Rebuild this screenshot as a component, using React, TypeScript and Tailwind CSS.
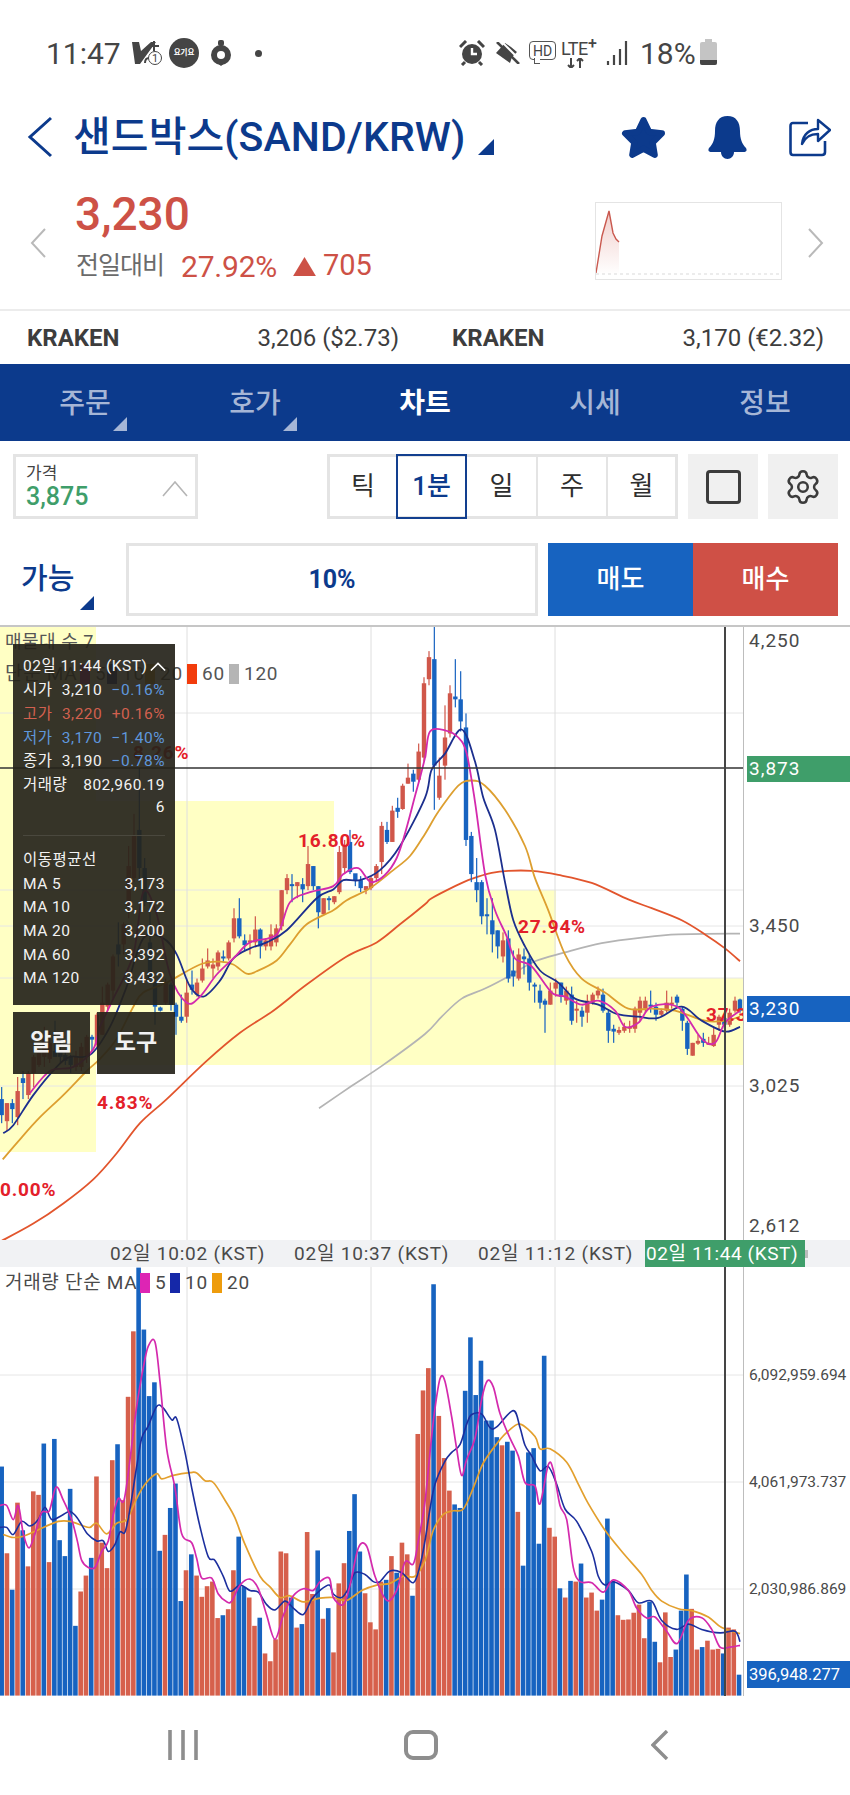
import React from 'react';
import { Settings } from 'lucide-react';

type Pt = [number, number];

const RED = '#d0574a';
const BLUE = '#1763c0';

// all chart numbers below were read off 3x crops, so they get scaled back here
const mx = (x: number) => x / 3;
const my = (y: number) => y / 2.489;
const vx = (x: number) => x / 3;
const vy = (y: number) => y / 2.825 - 27;

const join = (left: Pt[], right: Pt[]) => [...left, ...right.map(([x, y]) => [x + 1275, y] as Pt)];

// catmull-rom through the read-off points, the app's MA lines are smooth
const smooth = (pts: Pt[]) => {
  let d = `M${pts[0][0].toFixed(1)} ${pts[0][1].toFixed(1)}`;
  for (let i = 0; i < pts.length - 1; i++) {
    const p0 = pts[i - 1] ?? pts[i];
    const p1 = pts[i];
    const p2 = pts[i + 1];
    const p3 = pts[i + 2] ?? p2;
    const c1x = p1[0] + (p2[0] - p0[0]) / 6;
    const c1y = p1[1] + (p2[1] - p0[1]) / 6;
    const c2x = p2[0] - (p3[0] - p1[0]) / 6;
    const c2y = p2[1] - (p3[1] - p1[1]) / 6;
    d += ` C${c1x.toFixed(1)} ${c1y.toFixed(1)} ${c2x.toFixed(1)} ${c2y.toFixed(1)} ${p2[0].toFixed(1)} ${p2[1].toFixed(1)}`;
  }
  return d;
};
const toMain = (pts: Pt[]) => smooth(pts.map(([x, y]) => [mx(x), my(y)] as Pt));
const toVol = (pts: Pt[]) => smooth(pts.map(([x, y]) => [vx(x), vy(y)] as Pt));

const ma60 = join(
  [[0,1535],[100,1490],[190,1440],[280,1380],[350,1315],[420,1240],[500,1180],[620,1085],[720,1015],[820,960],[920,895],[1040,825],[1130,790],[1200,745],[1275,695]],
  [[20,680],[90,650],[140,632],[200,617],[250,612],[320,612],[400,622],[500,642],[610,683],[680,705],[770,735],[840,770],[900,805],[945,837]],
);
const ma120 = join(
  [[957,1203],[1050,1150],[1150,1095],[1275,1018]],
  [[50,975],[110,930],[180,905],[250,875],[330,837],[420,815],[530,792],[650,778],[760,770],[945,768]],
);
const ma20 = join(
  [[8,1330],[60,1280],[120,1225],[190,1170],[260,1110],[300,1080],[350,1030],[400,950],[430,915],[500,890],[600,845],[660,838],[700,845],[740,868],[770,862],[830,835],[870,795],[920,745],[1000,710],[1040,685],[1110,655],[1180,610],[1230,575],[1275,520]],
  [[40,465],[100,400],[140,387],[180,400],[240,460],[300,550],[330,630],[370,710],[420,820],[470,880],[540,915],[610,955],[680,955],[750,960],[840,985],[900,985],[945,975]],
);
const ma10 = join(
  [[10,1265],[40,1245],[100,1170],[170,1100],[210,1075],[270,1070],[330,1000],[380,900],[430,780],[490,780],[530,820],[570,900],[610,925],[660,885],[700,830],[750,805],[800,790],[860,760],[950,680],[1000,658],[1030,635],[1080,635],[1140,610],[1200,550],[1275,430]],
  [[20,360],[60,320],[110,260],[150,340],[175,430],[210,510],[240,640],[265,735],[300,800],[345,860],[400,890],[450,930],[520,945],[575,968],[640,975],[700,978],[770,950],[830,985],[900,1012],[945,1000]],
);
const ma5 = join(
  [[90,1165],[150,1110],[220,1100],[280,1055],[300,1000],[340,930],[400,820],[430,665],[470,720],[510,870],[560,940],[600,925],[650,870],[700,830],[750,790],[830,770],[870,690],[930,665],[1000,650],[1030,620],[1075,605],[1120,640],[1190,580],[1250,410],[1275,330]],
  [[15,265],[60,262],[100,280],[125,320],[150,440],[180,620],[210,710],[245,775],[270,830],[320,850],[380,915],[420,925],[470,945],[520,935],[570,960],[600,1000],[640,990],[680,950],[760,952],[830,1030],[870,1040],[900,990],[945,960]],
);

// x, wick top, wick bottom, body top, body bottom, 1 = blue
type Candle = [number, number, number, number, number, number];
const candlesLeft: Candle[] = [
  [5,1150,1240,1180,1220,1],[21,1190,1260,1190,1235,0],[37,1180,1240,1190,1205,1],[53,1125,1245,1160,1225,0],[69,1110,1180,1128,1140,1],[85,1110,1180,1115,1170,0],
  [101,1070,1150,1075,1115,0],[117,1060,1100,1065,1095,0],[133,1000,1100,1030,1075,0],[149,1010,1090,1040,1080,0],[165,985,1070,1060,1075,1],[181,1040,1090,1060,1075,1],
  [196,1060,1095,1070,1085,1],[212,1070,1115,1075,1095,1],[228,1060,1110,1075,1100,0],[244,1040,1110,1050,1100,0],[260,1020,1090,1025,1075,0],[276,1020,1060,1025,1032,1],
  [291,965,1050,970,1045,0],[307,900,1020,940,1020,0],[323,890,960,895,950,0],[339,820,930,825,910,0],[355,740,850,795,820,1],[371,740,820,745,795,0],
  [386,550,730,600,700,0],[402,470,640,525,630,0],[418,355,640,510,605,1],[434,580,700,605,690,1],[450,690,880,790,880,1],[465,880,995,890,950,1],
  [481,950,962,952,960,1],[497,880,945,890,940,0],[513,890,960,895,945,1],[528,940,1020,945,975,1],[544,920,990,975,985,1],[560,880,990,915,975,0],
  [576,860,920,895,908,1],[591,880,925,890,920,0],[607,830,890,855,885,0],[623,805,855,835,850,0],[639,830,880,845,855,0],[654,810,860,815,850,0],
  [670,810,840,825,830,1],[686,785,835,790,830,0],[702,705,790,730,780,0],[718,680,780,730,775,1],[734,770,810,785,797,1],[750,770,820,785,790,0],
  [766,725,800,758,790,0],[781,755,830,758,800,1],[797,780,810,785,800,0],[813,745,810,770,800,0],[829,745,800,755,790,0],[845,660,760,660,750,0],
  [861,620,670,630,660,0],[876,620,690,645,650,1],[892,640,680,640,650,0],[908,630,690,645,658,1],[924,550,660,595,650,0],[940,600,660,600,650,1],
  [955,650,755,650,715,1],[971,680,720,680,720,0],[987,675,710,680,685,1],[1003,675,695,675,690,0],[1018,550,670,565,665,0],[1034,535,620,550,605,0],
  [1050,510,620,540,615,1],[1066,620,650,618,635,1],[1082,625,665,635,655,1],[1098,650,670,650,660,0],[1113,625,660,630,655,0],[1129,595,640,600,630,0],
  [1145,490,620,500,590,0],[1161,490,545,510,540,1],[1177,450,540,462,540,0],[1193,430,480,455,465,1],[1208,395,460,400,458,0],[1224,345,395,380,395,0],
  [1240,360,415,370,390,1],[1256,295,390,315,385,0],[1272,130,340,145,330,0],
];
const candlesRight: Candle[] = [
  [12,65,150,80,135,0],[28,5,460,85,350,1],[43,330,435,375,430,0],[60,200,385,280,350,0],[75,150,280,170,270,0],[91,85,205,178,185,1],
  [107,115,265,185,240,1],[123,220,550,255,535,1],[139,515,640,525,620,1],[155,580,690,640,660,1],[170,635,745,640,725,1],[186,680,770,720,725,1],
  [202,680,815,735,770,1],[218,760,830,760,800,1],[234,765,840,785,825,0],[250,760,890,780,880,1],[265,810,900,860,875,1],[281,805,885,820,880,0],
  [297,805,870,825,832,1],[313,820,910,830,890,1],[329,890,940,895,900,1],[345,895,955,910,940,1],[360,930,1015,935,945,1],[376,890,945,910,945,0],
  [392,880,925,890,905,0],[408,890,940,890,925,1],[424,900,945,910,935,0],[440,900,995,920,985,1],[455,935,990,955,960,0],[471,950,1000,960,975,1],
  [487,920,990,935,965,0],[503,915,945,920,940,0],[519,900,930,910,922,0],[534,905,965,920,960,1],[550,960,1040,965,1010,1],[566,995,1040,1005,1012,1],
  [582,1000,1020,1008,1015,0],[598,990,1015,1000,1010,0],[614,985,1015,1000,1005,0],[630,950,1015,955,1005,0],[645,925,985,935,965,0],[661,925,965,935,955,0],
  [677,910,965,945,950,1],[693,940,985,950,970,1],[709,955,975,960,970,0],[725,910,965,940,960,0],[740,925,955,940,945,0],[756,920,950,925,940,1],
  [772,950,1010,955,985,1],[787,985,1070,990,1055,1],[803,1040,1072,1040,1072,0],[819,1020,1045,1035,1042,0],[835,1015,1050,1030,1040,1],[851,1025,1045,1040,1045,0],
  [866,1000,1050,1020,1048,0],[882,970,1010,975,995,0],[898,970,1005,978,995,1],[914,955,1000,965,995,0],[930,925,965,935,960,0],[945,930,965,932,960,1],
];
const candles: Candle[] = [...candlesLeft, ...candlesRight.map((c) => [c[0] + 1275, c[1], c[2], c[3], c[4], c[5]] as Candle)];

// bar tops in crop pixels, negative = blue bar
const volumeTops = [
  -640,885,-988,742,-820,922,710,720,-575,910,-562,-848,-893,-703,-1090,993,948,-898,668,855,927,622,-577,735,443,258,-78,-253,-441,-402,-878,833,-757,-688,-1020,933,-888,948,1008,978,965,1068,-1060,1043,933,-838,-980,1010,1090,-1067,1168,1190,1128,880,885,-1010,1095,-1085,825,1000,-877,1070,-1040,1165,970,913,-822,-718,-880,998,1080,1100,965,-960,893,-940,855,888,-1005,548,425,
  362,-125,497,616,708,-747,-757,-426,-275,-438,-341,-510,-510,-557,580,-570,-595,768,-920,-600,-588,-858,-327,813,838,-984,1010,-963,965,-914,1010,996,1047,-1016,-787,-965,1060,1073,1072,1053,1030,1125,-1022,-1135,1193,1052,1178,-1157,-1047,-945,1042,1157,-1150,1132,1157,1155,-1168,1095,1100,-1228,
];

const vol5 = join(
  [[0,750],[20,750],[40,790],[55,750],[70,830],[87,870],[105,830],[125,770],[148,765],[168,698],[190,735],[215,790],[232,850],[245,905],[265,925],[285,925],[305,880],[325,850],[340,775],[355,730],[372,735],[390,620],[410,470],[430,360],[445,300],[465,288],[480,400],[500,590],[525,700],[545,830],[575,855],[590,900],[605,955],[635,955],[655,1000],[680,1022],[695,1020],[720,975],[750,958],[775,985],[800,1060],[825,1128],[850,1060],[880,1005],[910,985],[940,990],[960,965],[988,955],[1000,1010],[1030,1030],[1050,975],[1075,870],[1100,865],[1125,950],[1160,1018],[1190,990],[1215,910],[1240,915],[1255,850],[1275,740]],
  [[15,600],[28,490],[45,392],[60,400],[80,500],[95,590],[110,665],[125,620],[150,560],[170,450],[187,398],[205,415],[225,490],[255,560],[280,610],[300,685],[330,695],[345,745],[370,635],[385,650],[405,750],[425,790],[445,925],[465,965],[500,968],[535,995],[565,960],[610,990],[635,1040],[665,1068],[690,1065],[725,1105],[757,1140],[790,1075],[830,1067],[860,1100],[885,1150],[915,1150],[945,1145]],
);
const vol10 = join(
  [[0,812],[20,812],[40,832],[65,795],[90,808],[115,790],[135,755],[155,790],[185,778],[210,767],[232,785],[262,830],[290,850],[310,850],[325,880],[345,860],[360,825],[375,825],[390,760],[410,640],[425,560],[445,525],[470,470],[490,475],[515,508],[530,505],[555,600],[575,700],[600,810],[625,895],[645,905],[670,950],[690,992],[720,975],[750,990],[775,995],[800,1030],[825,1045],[855,1020],[880,1040],[910,1058],[935,1015],[960,990],[988,975],[1000,1000],[1025,1010],[1045,985],[1065,940],[1095,945],[1120,965],[1140,965],[1170,935],[1205,940],[1240,968],[1260,920],[1275,850]],
  [[15,760],[30,690],[60,625],[80,600],[105,578],[125,520],[140,493],[170,492],[195,530],[215,528],[265,482],[285,530],[300,580],[320,610],[345,652],[370,640],[395,690],[420,760],[455,795],[500,880],[520,950],[540,975],[565,965],[610,990],[640,1025],[680,1020],[710,1075],[755,1100],[790,1085],[830,1100],[885,1110],[930,1105],[945,1135]],
);
const vol20 = join(
  [[10,832],[35,840],[65,838],[100,825],[135,810],[175,795],[210,795],[250,808],[270,812],[290,800],[320,830],[350,800],[380,790],[410,730],[435,690],[470,660],[485,675],[520,665],[570,657],[590,658],[615,680],[640,685],[675,735],[705,785],[735,860],[780,950],[810,980],[840,1010],[870,1005],[910,1022],[960,1012],[1000,1010],[1040,1018],[1085,990],[1130,975],[1170,970],[1210,950],[1245,950],[1275,905]],
  [[25,820],[55,775],[85,765],[115,760],[145,700],[175,630],[220,570],[250,540],[285,520],[330,555],[345,590],[375,590],[425,628],[460,690],[490,745],[540,820],[595,885],[650,945],[680,990],[710,1020],[760,1042],[800,1047],[850,1065],[890,1095],[945,1112]],
);

const tabs = ['주문', '호가', '차트', '시세', '정보'];

const Corner = ({ className }: { className: string }) => (
  <svg viewBox="0 0 14 14" className={className}>
    <polygon points="14,0 14,14 0,14" fill="currentColor" />
  </svg>
);

const StatusBar = () => (
  <div className="flex h-[106px] items-center text-[#454545]">
    <span className="ml-[46px] w-[80px] text-[30px]">11:47</span>
    <svg viewBox="0 0 30 24" className="ml-[6px] h-[24px] w-[30px]">
      <polygon points="0,1 7,1 9,10 19,1 24,1 8,23 3,23" fill="#454545" />
      <path d="M22 0 V10 M17 5 H27" stroke="#454545" strokeWidth="2" />
      <path d="M13 22 Q13 17 17 17" stroke="#454545" strokeWidth="2" fill="none" />
      <circle cx="23" cy="17" r="6.5" fill="#fff" stroke="#454545" strokeWidth="1" />
      <text x="23" y="21" textAnchor="middle" fontSize="11" fill="#454545">1</text>
    </svg>
    <span className="ml-[7px] flex h-[30px] w-[30px] items-center justify-center rounded-full bg-[#454545] text-[7.5px] font-bold text-white">
      요기요
    </span>
    <svg viewBox="0 0 20 26" className="ml-[12px] h-[26px] w-[20px]">
      <rect x="7" y="0" width="6" height="6" rx="2" fill="#454545" />
      <circle cx="10" cy="15" r="7" fill="none" stroke="#454545" strokeWidth="6" />
      <polygon points="5,22 15,22 10,26" fill="#454545" />
    </svg>
    <span className="ml-[24px] h-[7px] w-[7px] rounded-full bg-[#454545]" />
    <svg viewBox="0 0 26 26" className="ml-[197px] h-[26px] w-[26px]">
      <circle cx="13" cy="14" r="10" fill="#454545" />
      <path d="M13 8 V14 H18" stroke="#fff" strokeWidth="2.4" fill="none" />
      <path d="M1 7 L7 1 M25 7 L19 1" stroke="#454545" strokeWidth="3" />
      <path d="M6 22 L3 25 M20 22 L23 25" stroke="#454545" strokeWidth="3" />
    </svg>
    <svg viewBox="0 0 24 22" className="ml-[11px] h-[22px] w-[24px]">
      <path d="M9 1 L0 11 L14 21 L16 15 L21 10 L15 5 Z" fill="#454545" />
      <path d="M4 -2 L26 20" stroke="#fff" strokeWidth="2" />
      <path d="M1 0 L23 22" stroke="#454545" strokeWidth="2.6" />
    </svg>
    <span className="relative ml-[9px] mb-[5px] flex h-[19px] w-[27px] items-center justify-center rounded-[4px] border-[1.5px] border-[#555] text-[14px] leading-none">
      HD
      <span className="absolute bottom-[-5px] left-[4px] h-[6px] w-[6px] border-b-[1.5px] border-l-[1.5px] border-[#555] bg-white" />
    </span>
    <span className="relative ml-[5px] h-[26px] w-[40px]">
      <span className="absolute left-0 top-[-1px] text-[18px] leading-[20px] tracking-[-0.5px]">LTE</span>
      <span className="absolute left-[27px] top-[-4px] text-[16px] font-medium leading-[16px]">+</span>
      <svg viewBox="0 0 20 10" className="absolute bottom-[-2px] left-[5px] h-[10px] w-[20px]">
        <path d="M5 0 V10 M2 7 L5 10 L8 7 M14 10 V0 M11 3 L14 0 L17 3" stroke="#454545" strokeWidth="2" fill="none" />
      </svg>
    </span>
    <svg viewBox="0 0 22 24" className="ml-[5px] h-[24px] w-[22px]">
      <path d="M2 24 V20 M8 24 V14 M14 24 V8 M20 24 V0" stroke="#454545" strokeWidth="2.2" />
    </svg>
    <span className="ml-[12px] w-[56px] text-[30px]">18%</span>
    <span className="relative ml-[4px] flex h-[23px] w-[17px] flex-col justify-end rounded-[2px] bg-[#c4c4c4]">
      <span className="absolute left-[5px] top-[-3px] h-[3px] w-[7px] bg-[#c4c4c4]" />
      <span className="h-[5px] rounded-b-[2px] bg-[#454545]" />
    </span>
  </div>
);

const Header = () => (
  <div className="flex h-[62px] items-center text-[#0c3a8c]">
    <svg viewBox="0 0 26 42" className="ml-[27px] h-[42px] w-[26px]">
      <path d="M24 2 L3 21 L24 40" fill="none" stroke="#0c3a8c" strokeWidth="3" />
    </svg>
    <span className="ml-[20px] w-[396px] whitespace-nowrap text-[41px] font-medium leading-none tracking-[0.1px]">샌드박스(SAND/KRW)</span>
    <Corner className="ml-[9px] mt-[19px] h-[16px] w-[16px]" />
    <svg viewBox="0 0 44 42" className="ml-[127px] h-[43px] w-[45px]">
      <polygon points="22,4 27.5,15.5 40,17 31,26 33,38 22,32 11,38 13,26 4,17 16.5,15.5" fill="#0c3a8c" stroke="#0c3a8c" strokeWidth="6" strokeLinejoin="round" />
    </svg>
    <svg viewBox="0 0 39 43" className="ml-[42px] h-[43px] w-[39px]">
      <path d="M19.5 0 C28 0 32 6 32 15 C32 23 34 28 38 32 Q40 36 35 36 H26 C26 40 23 43 19.5 43 C16 43 13 40 13 36 H4 Q-1 36 1 32 C5 28 7 23 7 15 C7 6 11 0 19.5 0 Z" fill="#0c3a8c" />
    </svg>
    <svg viewBox="0 0 42 40" className="ml-[42px] h-[40px] w-[42px]">
      <path d="M19 6 H4 Q1.5 6 1.5 9 V35 Q1.5 38 4 38 H33 Q36 38 36 35 V24" fill="none" stroke="#0c3a8c" strokeWidth="2.6" />
      <path d="M13 27 C14 17 21 12 29 12 V3 L41 13 L29 24 V17 C22 17 16 20 13 27 Z" fill="#fff" stroke="#0c3a8c" strokeWidth="2.4" strokeLinejoin="round" />
    </svg>
  </div>
);

const PriceRow = () => (
  <div className="flex h-[143px] border-b-2 border-[#ececec]">
    <svg viewBox="0 0 16 30" className="ml-[30px] mt-[60px] h-[30px] w-[16px]">
      <path d="M15 1 L2 15 L15 29" fill="none" stroke="#b9b9b9" strokeWidth="2" />
    </svg>
    <div className="ml-[29px] flex flex-col pt-[20px]">
      <span className="text-[46px] font-medium leading-[52px] text-[#cd5146]">3,230</span>
      <div className="ml-[1px] mt-[10px] flex h-[32px] items-center">
        <span className="w-[105px] text-[25px] text-[#6b6b6b] tracking-[-1px]">전일대비</span>
        <span className="w-[111px] text-[30px] tracking-[-0.2px] text-[#cd5146]">27.92%</span>
        <svg viewBox="0 0 24 20" className="mt-[1px] h-[19px] w-[25px]">
          <polygon points="12,0 24,20 0,20" fill="#cd5146" />
        </svg>
        <span className="ml-[6px] text-[29px] text-[#cd5146]">705</span>
      </div>
    </div>
    <div className="relative ml-auto mt-[34px] h-[78px] w-[187px] border border-[#e4e4e4]">
      <svg viewBox="0 0 185 76" className="h-[76px] w-[185px]">
        <defs>
          <linearGradient id="spark" x1="0" x2="0" y1="0" y2="1">
            <stop offset="0" stopColor="#cd5146" stopOpacity="0.28" />
            <stop offset="1" stopColor="#cd5146" stopOpacity="0" />
          </linearGradient>
        </defs>
        <path d="M0 70 L6 33 L13 8 L17 30 L20 36 L23 39 V72 H0 Z" fill="url(#spark)" />
        <path d="M0 70 L6 33 L13 8 L17 30 L20 36 L23 39" fill="none" stroke="#c9584e" strokeWidth="1.4" />
        <path d="M0 71 H185" stroke="#d9d9d9" strokeDasharray="3 3" />
      </svg>
    </div>
    <svg viewBox="0 0 16 30" className="ml-[26px] mr-[26px] mt-[60px] h-[30px] w-[16px]">
      <path d="M1 1 L14 15 L1 29" fill="none" stroke="#b9b9b9" strokeWidth="2" />
    </svg>
  </div>
);

const KrakenRow = () => (
  <div className="flex h-[53px] items-center text-[24px] text-[#3d3d3d]">
    <div className="ml-[27px] flex w-[372px] justify-between">
      <span className="font-bold">KRAKEN</span>
      <span>3,206 ($2.73)</span>
    </div>
    <div className="ml-[53px] flex w-[372px] justify-between">
      <span className="font-bold">KRAKEN</span>
      <span>3,170 (€2.32)</span>
    </div>
  </div>
);

const TabBar = () => (
  <div className="grid h-[77px] grid-cols-5 bg-[#0c3a8c] text-[28px]">
    {tabs.map((t, i) => (
      <div key={t} className={`relative flex items-center justify-center pt-[3px] ${i === 2 ? 'font-bold text-white' : 'font-medium text-[#a6b6d6]'}`}>
        {t}
        {i < 2 && <Corner className="absolute left-[113px] top-[53px] h-[14px] w-[14px]" />}
      </div>
    ))}
  </div>
);

const Controls = () => (
  <div className="pb-[9px]">
    <div className="flex pl-[13px] pt-[13px]">
      <div className="relative h-[65px] w-[185px] border-[3px] border-[#e4e4e4] pl-[10px] pt-[6px]">
        <div className="text-[17px] leading-[20px] text-[#444]">가격</div>
        <div className="text-[25px] font-medium leading-[28px] text-[#3f9e6a]">3,875</div>
        <svg viewBox="0 0 26 16" className="absolute left-[146px] top-[24px] h-[16px] w-[26px]">
          <path d="M1 15 L13 1 L25 15" fill="none" stroke="#b5b5b5" strokeWidth="1.6" />
        </svg>
      </div>
      <div className="ml-[129px] flex h-[65px] w-[351px] border-[3px] border-[#e4e4e4] text-[26px] text-[#2e2e2e]">
        <div className="flex w-[66px] items-center justify-center">틱</div>
        <div className="z-10 mt-[-3px] flex h-[65px] w-[71px] items-center justify-center border-2 border-[#123f8f] font-medium text-[#0c3a8c]">1분</div>
        <div className="flex w-[71px] items-center justify-center border-r-2 border-[#e4e4e4]">일</div>
        <div className="flex w-[70px] items-center justify-center border-r-2 border-[#e4e4e4]">주</div>
        <div className="flex flex-1 items-center justify-center">월</div>
      </div>
      <div className="ml-[10px] flex h-[65px] w-[70px] items-center justify-center bg-[#f0f0f0]">
        <div className="h-[34px] w-[35px] rounded-[4px] border-[3px] border-[#3c3c3c]" />
      </div>
      <div className="ml-[10px] flex h-[65px] w-[70px] items-center justify-center bg-[#f0f0f0]">
        <Settings className="h-[38px] w-[38px] text-[#3c3c3c]" strokeWidth={1.6} />
      </div>
    </div>
    <div className="mt-[24px] flex h-[73px]">
      <div className="relative w-[126px] pl-[21px] text-[29px] font-medium leading-[73px] text-[#0c3a8c]">
        가능
        <Corner className="absolute left-[80px] top-[53px] h-[14px] w-[14px]" />
      </div>
      <div className="flex w-[412px] items-center justify-center border-[3px] border-[#e4e4e4] text-[25px] font-bold text-[#0c3a8c]">10%</div>
      <div className="ml-[10px] flex w-[145px] items-center justify-center bg-[#1763c0] text-[26px] font-medium text-white">매도</div>
      <div className="flex w-[145px] items-center justify-center bg-[#cf5046] text-[26px] font-medium text-white">매수</div>
    </div>
  </div>
);

const MainChart = () => (
  <svg viewBox="0 0 743 615" className="absolute left-0 top-0 h-[615px] w-[743px]">
    <rect x="0" y="2" width="96" height="525" fill="#ffffc4" />
    <rect x="96" y="176" width="238" height="264" fill="#ffffc4" />
    <rect x="334" y="265" width="222" height="175" fill="#ffffc4" />
    <rect x="556" y="353" width="187" height="87" fill="#ffffc4" />
    {[88, 265, 301, 353, 461].map((y) => (
      <line key={y} x1="0" x2="743" y1={y} y2={y} stroke="#e6e6e6" />
    ))}
    {[187, 371, 555].map((x) => (
      <line key={x} x1={x} x2={x} y1="2" y2="615" stroke="#dedede" />
    ))}
    <path d={toMain(ma120)} fill="none" stroke="#b4b4b4" strokeWidth="1.7" />
    <path d={toMain(ma60)} fill="none" stroke="#e2552d" strokeWidth="1.8" />
    {candles.map(([x, wt, wb, bt, bb, b]) => (
      <g key={x} fill={b ? BLUE : RED} stroke="none">
        <rect x={mx(x) - 0.6} y={my(wt)} width="1.2" height={my(wb) - my(wt)} />
        <rect x={mx(x) - 2.2} y={my(bt)} width="4.4" height={Math.max(my(bb) - my(bt), 1.5)} />
      </g>
    ))}
    <path d={toMain(ma20)} fill="none" stroke="#dd9f30" strokeWidth="1.8" />
    <path d={toMain(ma10)} fill="none" stroke="#1c2f8e" strokeWidth="1.8" />
    <path d={toMain(ma5)} fill="none" stroke="#d42aad" strokeWidth="1.8" />
    <line x1="0" x2="743" y1="143" y2="143" stroke="#333" strokeWidth="1.5" />
  </svg>
);

const VolumeChart = () => (
  <svg viewBox="0 0 743 429" className="absolute left-0 top-[642px] h-[429px] w-[743px]">
    {[108, 215, 322].map((y) => (
      <line key={y} x1="0" x2="743" y1={y} y2={y} stroke="#e6e6e6" />
    ))}
    {[187, 371, 555].map((x) => (
      <line key={x} x1={x} x2={x} y1="0" y2="429" stroke="#dedede" />
    ))}
    {volumeTops.map((t, i) => {
      const top = vy(Math.abs(t));
      const cx = 1.67 + i * 5.267;
      return <rect key={i} x={cx - 2.3} y={top} width="4.6" height={Math.max(428.6 - top, 0)} fill={t < 0 ? BLUE : '#d6604c'} />;
    })}
    <path d={toVol(vol20)} fill="none" stroke="#e3a02e" strokeWidth="1.7" />
    <path d={toVol(vol10)} fill="none" stroke="#1c2f9e" strokeWidth="1.6" />
    <path d={toVol(vol5)} fill="none" stroke="#d42aad" strokeWidth="1.7" />
  </svg>
);

const infoRow = 'flex h-[23.7px] items-center justify-between';

const InfoPanel = () => (
  <>
    <div className="absolute left-[13px] top-[19px] h-[361px] w-[162px] bg-[#25231a]/[0.92] px-[10px] pt-[11px] text-[15.5px] tracking-[0.5px] text-[#f2f2f2]">
      <div className="relative flex h-[24px] items-center whitespace-nowrap">
        02일 11:44 (KST)
        <svg viewBox="0 0 18 10" className="absolute left-[127px] top-[7px] h-[10px] w-[16px]">
          <path d="M1 9 L9 1 L17 9" fill="none" stroke="#fff" strokeWidth="1.8" />
        </svg>
      </div>
      <div className={infoRow}><span>시가</span><span>3,210</span><span className="text-[#5f97dc]">−0.16%</span></div>
      <div className={`${infoRow} text-[#d2604f]`}><span>고가</span><span>3,220</span><span>+0.16%</span></div>
      <div className={`${infoRow} text-[#5f97dc]`}><span>저가</span><span>3,170</span><span>−1.40%</span></div>
      <div className={infoRow}><span>종가</span><span>3,190</span><span className="text-[#5f97dc]">−0.78%</span></div>
      <div className={infoRow}><span>거래량</span><span>802,960.19</span></div>
      <div className="h-[20px] text-right leading-[20px]">6</div>
      <div className="mt-[18px] border-t border-[#4a483e]" />
      <div className="mt-[12px] flex h-[24px] items-center">이동평균선</div>
      <div className={infoRow}><span>MA 5</span><span>3,173</span></div>
      <div className={infoRow}><span>MA 10</span><span>3,172</span></div>
      <div className={infoRow}><span>MA 20</span><span>3,200</span></div>
      <div className={infoRow}><span>MA 60</span><span>3,392</span></div>
      <div className={infoRow}><span>MA 120</span><span>3,432</span></div>
    </div>
    <div className="absolute left-[13px] top-[387px] flex h-[62px] w-[77px] items-center justify-center bg-[#25231a]/[0.92] text-[23px] font-bold text-[#f2f2f2]">알림</div>
    <div className="absolute left-[97px] top-[387px] flex h-[62px] w-[78px] items-center justify-center bg-[#25231a]/[0.92] text-[23px] font-bold text-[#f2f2f2]">도구</div>
  </>
);

const pct = 'absolute text-[19px] font-bold leading-none tracking-[0.8px] text-[#e3202a]';
const axis = 'absolute left-[749px] text-[19px] leading-[22px] tracking-[1px] text-[#4a4a4a]';
const small = 'absolute left-[749px] text-[15.5px] leading-[20px] text-[#4a4a4a]';

const ChartArea = () => (
  <div className="relative h-[1071px] overflow-hidden border-t-2 border-[#c6c6c6]">
    <div className="absolute left-0 top-[-2px] h-[1073px] w-[850px]">
      <MainChart />
      <div className="absolute left-[743px] top-0 h-[1071px] w-px bg-[#bdbdbd]" />

      <span className="absolute left-[5px] top-[6px] text-[18px] leading-[22px] tracking-[0.5px] text-[#555]">매물대 수 7</span>
      <div className="absolute left-[5px] top-[38px] flex h-[22px] items-center text-[19px] tracking-[0.7px] text-[#555]">
        <span className="w-[75px]">단순 MA</span>
        <span className="h-[20px] w-[10px] bg-[#d42aad]" />
        <span className="ml-[5px] w-[12px]">5</span>
        <span className="h-[20px] w-[10px] bg-[#1c2f9e]" />
        <span className="ml-[5px] w-[23px]">10</span>
        <span className="h-[20px] w-[10px] bg-[#e3a02e]" />
        <span className="ml-[5px] w-[27px]">20</span>
        <span className="h-[20px] w-[10px] bg-[#f23c0c]" />
        <span className="ml-[5px] w-[27px]">60</span>
        <span className="h-[20px] w-[10px] bg-[#b5b5b5]" />
        <span className="ml-[5px]">120</span>
      </div>

      <span className={`${pct} left-[133px] top-[118px]`}>8.26%</span>
      <span className={`${pct} left-[298px] top-[206px]`}>16.80%</span>
      <span className={`${pct} left-[518px] top-[292px]`}>27.94%</span>
      <span className={`${pct} left-[97px] top-[468px]`}>4.83%</span>
      <span className={`${pct} left-0 top-[555px]`}>0.00%</span>
      <div className="absolute left-[706px] top-[380px] h-[20px] w-[37px] overflow-hidden">
        <span className={`${pct} left-0 top-0`}>37.35%</span>
      </div>

      <InfoPanel />

      <span className={`${axis} top-[5px]`}>4,250</span>
      <span className={`${axis} top-[290px]`}>3,450</span>
      <span className={`${axis} top-[450px]`}>3,025</span>
      <span className={`${axis} top-[590px]`}>2,612</span>
      <span className="absolute left-[747px] top-[131px] h-[26px] w-[103px] bg-[#3f9e6a] pl-[2px] text-[19px] leading-[26px] tracking-[1px] text-white">3,873</span>
      <span className="absolute left-[747px] top-[371px] h-[26px] w-[103px] bg-[#1763c0] pl-[2px] text-[19px] leading-[26px] tracking-[1px] text-white">3,230</span>

      {/* time axis */}
      <div className="absolute left-0 top-[615px] h-[27px] w-[850px] bg-[#f1f2f4] text-[19px] leading-[27px] tracking-[0.8px] text-[#4a4a4a]">
        <span className="absolute left-[110px]">02일 10:02 (KST)</span>
        <span className="absolute left-[294px]">02일 10:37 (KST)</span>
        <span className="absolute left-[478px]">02일 11:12 (KST)</span>
      </div>

      <VolumeChart />
      <div className="absolute left-[5px] top-[647px] flex h-[22px] items-center text-[19px] tracking-[0.7px] text-[#4a4a4a]">
        <span className="w-[135px]">거래량 단순 MA</span>
        <span className="h-[20px] w-[10px] bg-[#dd25b4]" />
        <span className="ml-[5px] w-[15px]">5</span>
        <span className="h-[20px] w-[10px] bg-[#1528a8]" />
        <span className="ml-[5px] w-[27px]">10</span>
        <span className="h-[20px] w-[10px] bg-[#ee9c0c]" />
        <span className="ml-[5px]">20</span>
      </div>

      <span className={`${small} top-[740px]`}>6,092,959.694</span>
      <span className={`${small} top-[847px]`}>4,061,973.737</span>
      <span className={`${small} top-[954px]`}>2,030,986.869</span>
      <span className="absolute left-[747px] top-[1036px] h-[27px] w-[103px] bg-[#1763c0] pl-[2px] text-[16.5px] leading-[27px] text-white">396,948.277</span>

      {/* crosshair */}
      <div className="absolute left-[724px] top-0 h-[1071px] w-[2px] bg-[#454545]" />
      <span className="absolute left-[645px] top-[615px] h-[27px] w-[160px] bg-[#3f9e6a] pl-[1px] text-[19px] leading-[27px] tracking-[0.6px] text-white whitespace-nowrap">02일 11:44 (KST)</span>
      <div className="absolute left-[805px] top-[625px] h-[8px] w-[3px] bg-[#bbb]" />
    </div>
  </div>
);

const NavBar = () => (
  <div className="flex h-[99px] items-start text-[#8e8e8e]">
    <svg viewBox="0 0 30 30" className="ml-[168px] mt-[34px] h-[30px] w-[30px]">
      <path d="M2 0 V30 M15 0 V30 M28 0 V30" stroke="#8e8e8e" strokeWidth="3.6" />
    </svg>
    <div className="ml-[206px] mt-[34px] h-[30px] w-[34px] rounded-[9px] border-[4px] border-[#8e8e8e]" />
    <svg viewBox="0 0 18 30" className="ml-[213px] mt-[34px] h-[30px] w-[18px]">
      <path d="M16 1 L2 15 L16 29" fill="none" stroke="#8e8e8e" strokeWidth="3.4" />
    </svg>
  </div>
);

export default function App() {
  return (
    <div className="h-[1795px] w-[850px] overflow-hidden bg-white font-[Roboto,'Noto_Sans_CJK_KR',sans-serif]">
      <StatusBar />
      <Header />
      <PriceRow />
      <KrakenRow />
      <TabBar />
      <Controls />
      <ChartArea />
      <NavBar />
    </div>
  );
}
